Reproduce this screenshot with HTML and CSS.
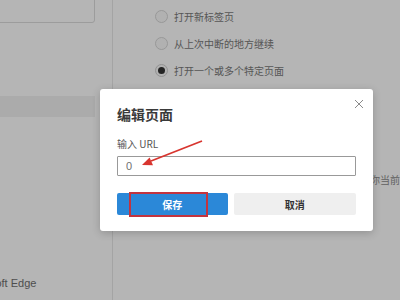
FILE: index.html
```html
<!DOCTYPE html>
<html>
<head>
    <title>编辑页面</title>
    <link rel="stylesheet" href="styles.css">
</head>
<body>
    <div class="settings">
        <aside class="sidebar">
            <div class="search"></div>
            <div class="nav-item active"></div>
            <div class="about">Microsoft Edge</div>
        </aside>

        <main class="content">
            <ul class="radio-list">
                <li><span class="radio"></span>打开新标签页</li>
                <li><span class="radio"></span>从上次中断的地方继续</li>
                <li><span class="radio checked"></span>打开一个或多个特定页面</li>
            </ul>
            <p class="hint">选择要在启动时打开的页面，或者直接改为使用你当前打开的页面</p>
        </main>
    </div>

    <div class="overlay"></div>

    <div class="dialog">
        <button class="close" aria-label="关闭">
            <svg width="10" height="10" viewBox="0 0 10 10">
                <path d="M1 1 L9 9 M9 1 L1 9" stroke="#8a8a8a" stroke-width="1" fill="none"/>
            </svg>
        </button>
        <h2>编辑页面</h2>
        <label for="url">输入 URL</label>
        <input id="url" type="text" value="0">
        <div class="actions">
            <div class="save-wrap">
                <button class="btn primary">保存</button>
                <span class="mark"></span>
            </div>
            <button class="btn">取消</button>
        </div>
    </div>

    <!-- red annotation arrow -->
    <svg class="arrow" width="400" height="300" viewBox="0 0 400 300">
        <line x1="202" y1="141" x2="151" y2="161" stroke="#d8352f" stroke-width="1.8"/>
        <polygon points="142,165 153,165.2 149.6,157.4" fill="#d8352f"/>
    </svg>
</body>
</html>
```

FILE: styles.css
```css
* {
    box-sizing: border-box;
}

body {
    margin: 0;
    width: 400px;
    height: 300px;
    overflow: hidden;
    font-family: "Noto Sans CJK SC", "Liberation Sans", sans-serif;
    background-color: #ffffff;
    position: relative;
}

.settings {
    display: flex;
    height: 300px;
}

.sidebar {
    width: 166px;
    margin-left: -53px;
    padding: 0 17px 10px 16px;
    border-right: 1px solid #e8e8e8;
    display: flex;
    flex-direction: column;
    flex-shrink: 0;
}

.search {
    margin-top: -5px;
    height: 28px;
    border: 1px solid #dcdcdc;
    border-radius: 3px;
    background-color: #ffffff;
}

.nav-item {
    height: 21px;
    margin-left: -16px;
}

.nav-item.active {
    margin-top: 73px;
    background-color: #f1f1f1;
}

.about {
    margin-top: auto;
    font-size: 11px;
    line-height: 14px;
    color: #6e6e6e;
    font-family: "Liberation Sans", "Noto Sans CJK SC", sans-serif;
    white-space: nowrap;
}

.content {
    flex: 1;
    padding-left: 42px;
    min-width: 0;
}

.radio-list {
    list-style: none;
    margin: 0;
    padding: 3px 0 0;
}

.radio-list li {
    display: flex;
    align-items: center;
    height: 27px;
    font-size: 10px;
    color: #7a7a7a;
}

.radio {
    width: 13px;
    height: 13px;
    border: 1px solid #d6d6d6;
    border-radius: 50%;
    background-color: #fafafa;
    margin-right: 6px;
    display: flex;
    align-items: center;
    justify-content: center;
}

.radio.checked {
    border-color: #cfcfcf;
}

.radio.checked::after {
    content: "";
    width: 7px;
    height: 7px;
    border-radius: 50%;
    background-color: #333333;
}

.hint {
    margin: 89px 0 0 5px;
    font-size: 10px;
    line-height: 14px;
    color: #8c8c8c;
    white-space: nowrap;
}

.overlay {
    position: absolute;
    inset: 0;
    background-color: rgba(0, 0, 0, 0.29);
}

.dialog {
    position: absolute;
    left: 100px;
    top: 89px;
    width: 273px;
    padding: 15px 17px 16px;
    background-color: #ffffff;
    border-radius: 3px;
    box-shadow: 0 2px 8px rgba(0, 0, 0, 0.2);
    display: flex;
    flex-direction: column;
}

.close {
    position: absolute;
    top: 7px;
    right: 8px;
    width: 12px;
    height: 12px;
    padding: 1px;
    border: none;
    background: none;
}

.dialog h2 {
    margin: 0;
    font-size: 14px;
    line-height: 20px;
    font-weight: bold;
    color: #3a3a3a;
}

.dialog label {
    margin-top: 13px;
    font-size: 10px;
    line-height: 14px;
    color: #555555;
}

.dialog input {
    margin-top: 5px;
    height: 20px;
    padding: 0 8px;
    border: 1px solid #999999;
    border-radius: 1px;
    font-family: "Liberation Sans", sans-serif;
    font-size: 11px;
    color: #707070;
    outline: none;
}

.actions {
    margin-top: 17px;
    display: flex;
    gap: 6px;
}

.save-wrap {
    flex: 1;
    position: relative;
    display: flex;
}

.btn {
    flex: 1;
    height: 22px;
    border: none;
    border-radius: 2px;
    background-color: #efefef;
    color: #333333;
    font-family: "Noto Sans CJK SC", sans-serif;
    font-size: 10px;
    font-weight: bold;
}

.btn.primary {
    background-color: #2b88d8;
    color: #ffffff;
}

.mark {
    position: absolute;
    top: -1px;
    bottom: -2px;
    left: 12px;
    right: 20px;
    border: 2px solid #c3343f;
}

.arrow {
    position: absolute;
    left: 0;
    top: 0;
    pointer-events: none;
}
```
